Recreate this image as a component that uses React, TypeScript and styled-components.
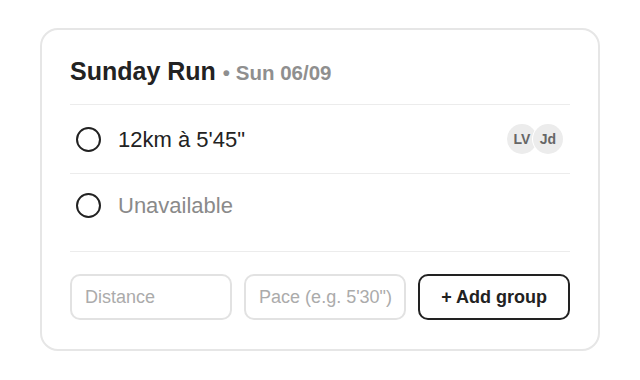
import React from "react";
import styled, { createGlobalStyle } from "styled-components";

const Global = createGlobalStyle`
  html, body { margin: 0; padding: 0; background: #ffffff; }
  body { font-family: "Liberation Sans", Arial, sans-serif; color: #222; }
  * { box-sizing: border-box; }
`;

const Page = styled.div`
  padding: 28px 40px;
  display: flex;
`;

const Card = styled.section`
  width: 560px;
  border: 2px solid #e6e6e6;
  border-radius: 18px;
  padding: 27px 28px 29px;
  background: #fff;
`;

const Header = styled.div`
  padding-bottom: 18px;
  border-bottom: 1px solid #ececec;
  display: flex;
  align-items: baseline;
`;

const Title = styled.h2`
  margin: 0;
  font-size: 25px;
  font-weight: 700;
  color: #222;
  line-height: normal;
`;

const DateText = styled.span`
  margin-left: 7px;
  font-size: 20.5px;
  font-weight: 700;
  color: #8f8f8f;
`;

const Row = styled.div<{ $last?: boolean }>`
  display: flex;
  align-items: center;
  gap: 17px;
  padding: 18px 7px 18px 6px;
  min-height: ${(p) => (p.$last ? "62px" : "69px")};
  border-bottom: ${(p) => (p.$last ? "none" : "1px solid #ececec")};
`;

const Radio = styled.span`
  width: 25px;
  height: 25px;
  border-radius: 50%;
  border: 2.5px solid #222;
  flex: none;
`;

const Label = styled.span<{ $muted?: boolean }>`
  flex: 1;
  font-size: 22px;
  line-height: 25px;
  color: ${(p) => (p.$muted ? "#8a8a8a" : "#222")};
`;

const Avatars = styled.div`
  display: flex;
`;

const Avatar = styled.span`
  width: 30px;
  height: 30px;
  border-radius: 50%;
  background: #ececec;
  color: #666;
  font-size: 14px;
  font-weight: 700;
  display: flex;
  align-items: center;
  justify-content: center;
  & + & {
    margin-left: -4px;
    box-shadow: -1px 0 0 #fff;
  }
`;

const Footer = styled.div`
  margin-top: 15px;
  padding-top: 22px;
  border-top: 1px solid #ececec;
  display: flex;
  gap: 12px;
`;

const Input = styled.input`
  flex: 1;
  min-width: 0;
  height: 46px;
  border: 2px solid #e2e2e2;
  border-radius: 10px;
  padding: 0 6px 0 13px;
  font-family: "Liberation Sans", Arial, sans-serif;
  font-size: 18px;
  color: #222;
  outline: none;
  &::placeholder { color: #ababab; }
`;

const AddButton = styled.button`
  flex: none;
  height: 46px;
  padding: 0 21px;
  border: 2px solid #222;
  border-radius: 10px;
  background: #fff;
  color: #222;
  font-family: "Liberation Sans", Arial, sans-serif;
  font-size: 18px;
  font-weight: 700;
  cursor: pointer;
`;

export default function App() {
  return (
    <>
      <Global />
      <Page>
        <Card>
          <Header>
            <Title>Sunday Run</Title>
            <DateText>• Sun 06/09</DateText>
          </Header>
          <Row>
            <Radio />
            <Label>12km à 5'45"</Label>
            <Avatars>
              <Avatar>LV</Avatar>
              <Avatar>Jd</Avatar>
            </Avatars>
          </Row>
          <Row $last>
            <Radio />
            <Label $muted>Unavailable</Label>
          </Row>
          <Footer>
            <Input placeholder="Distance" />
            <Input placeholder={`Pace (e.g. 5'30")`} />
            <AddButton>+ Add group</AddButton>
          </Footer>
        </Card>
      </Page>
    </>
  );
}
